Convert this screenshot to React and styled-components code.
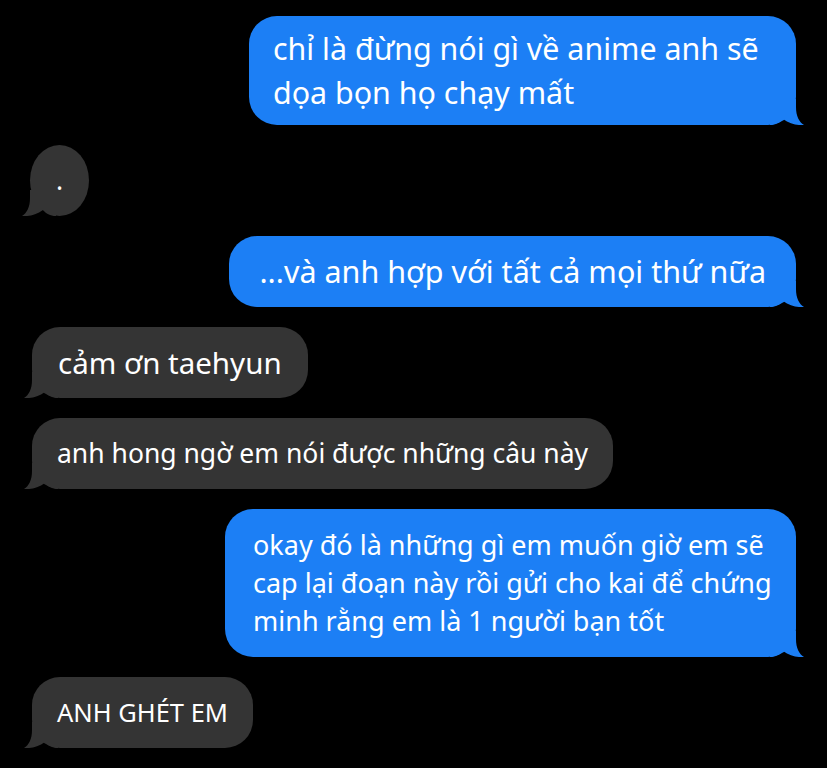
import React from "react";
import styled, { createGlobalStyle } from "styled-components";

const Global = createGlobalStyle`
  html, body {
    margin: 0;
    padding: 0;
    background: #000;
  }
  body {
    font-family: "Noto Sans", "DejaVu Sans", sans-serif;
    -webkit-font-smoothing: antialiased;
  }
`;

const Thread = styled.main`
  display: flex;
  flex-direction: column;
  gap: 20px;
  min-height: 768px;
  box-sizing: border-box;
  padding: 16px 31px 0 32px;
  background: #000;
`;

const Bubble = styled.div`
  position: relative;
  align-self: ${(p) => (p.$me ? "flex-end" : "flex-start")};
  box-sizing: border-box;
  width: ${(p) => (p.$width ? `${p.$width}px` : "auto")};
  margin-left: ${(p) => (p.$oval ? "-2px" : "0")};
  padding: ${(p) => p.$py}px ${(p) => p.$px}px;
  border-radius: ${(p) => (p.$oval ? "30px / 36px" : "28px")};
  background: ${(p) => (p.$me ? "#1c7ff5" : "#343434")};
  color: #fff;
  font-size: ${(p) => p.$size}px;
  line-height: ${(p) => p.$lh}px;
  white-space: nowrap;
`;

const Line = styled.span`
  display: block;
`;

const Tail = styled.svg`
  position: absolute;
  bottom: 0;
  width: 34px;
  height: 26px;
  ${(p) => (p.$me ? "right: -8px;" : "left: -8px; transform: scaleX(-1);")}
  fill: ${(p) => (p.$me ? "#1c7ff5" : "#343434")};
`;

const messages = [
  {
    me: true,
    lines: ["chỉ là đừng nói gì về anime anh sẽ", "dọa bọn họ chạy mất"],
    size: 30.4,
    lh: 44,
    py: 10.5,
    px: 24,
    width: 547,
  },
  { me: false, oval: true, lines: ["."], size: 26.5, lh: 39, py: 16, px: 26 },
  {
    me: true,
    lines: ["...và anh hợp với tất cả mọi thứ nữa"],
    size: 30.5,
    lh: 39,
    py: 16,
    px: 30,
  },
  { me: false, lines: ["cảm ơn taehyun"], size: 29.5, lh: 39, py: 16, px: 26 },
  {
    me: false,
    lines: ["anh hong ngờ em nói được những câu này"],
    size: 26.5,
    lh: 39,
    py: 16,
    px: 25,
  },
  {
    me: true,
    lines: [
      "okay đó là những gì em muốn giờ em sẽ",
      "cap lại đoạn này rồi gửi cho kai để chứng",
      "minh rằng em là 1 người bạn tốt",
    ],
    size: 27,
    lh: 38,
    py: 17,
    px: 28,
    width: 571,
  },
  { me: false, lines: ["ANH GHÉT EM"], size: 25.5, lh: 39, py: 16, px: 25 },
];

function Message({ m }) {
  return (
    <Bubble
      $me={m.me}
      $oval={m.oval}
      $size={m.size}
      $lh={m.lh}
      $py={m.py}
      $px={m.px}
      $width={m.width}
    >
      {m.lines.map((l, i) => (
        <Line key={i}>{l}</Line>
      ))}
      <Tail $me={m.me} viewBox="0 0 34 26" aria-hidden="true">
        <path d="M0 0 H26 V8 C26 17 29 23 34 26 C28 26.6 20 25 13 20 C10 23.5 6 26 0 26 Z" />
      </Tail>
    </Bubble>
  );
}

export default function App() {
  return (
    <>
      <Global />
      <Thread>
        {messages.map((m, i) => (
          <Message key={i} m={m} />
        ))}
      </Thread>
    </>
  );
}
